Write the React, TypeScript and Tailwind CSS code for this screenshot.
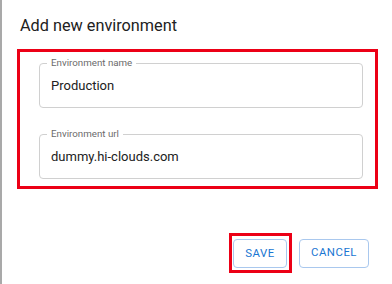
import React from "react";

function Field({ label, value }: { label: string; value: string }) {
  return (
    <div className="relative h-[45px] rounded-[4px] border border-[#d0d0d0] flex items-center pl-[11px]">
      <span className="absolute left-[7px] top-[-7px] bg-white px-[4px] text-[9.75px] leading-[12px] text-[#6b6b6b]">
        {label}
      </span>
      <span className="text-[13px] text-[#212121]">{value}</span>
    </div>
  );
}

export default function App() {
  return (
    <div
      className="w-[392px] h-[284px] bg-white border-l-2 border-[#a9a9a9] flex flex-col"
      style={{ fontFamily: "Roboto, 'Liberation Sans', sans-serif" }}
    >
      <div className="pl-[18px] pt-[15px] h-[49px] text-[16.25px] leading-[22px] text-[#212121]">
        Add new environment
      </div>
      <div className="ml-[15px] w-[361px] h-[140px] border-[3px] border-[#ec0016] pl-[19px] pr-[12px] pt-[11px] flex flex-col gap-[26px]">
        <Field label="Environment name" value="Production" />
        <Field label="Environment url" value="dummy.hi-clouds.com" />
      </div>
      <div className="flex justify-end items-center pr-[23px] pt-[44px] gap-[7px]">
        <div className="border-[3px] border-[#ec0016] pt-[3px] pb-[2px] pl-[1px] pr-[2px]">
          <button className="w-[54px] h-[29px] rounded-[4px] border border-[#a9c8ee] text-[#1976d2] text-[11.4px] font-normal tracking-[0.5px]">
            SAVE
          </button>
        </div>
        <button className="w-[70px] h-[29px] rounded-[4px] border border-[#a9c8ee] text-[#1976d2] text-[11.4px] font-normal tracking-[0.5px]">
          CANCEL
        </button>
      </div>
    </div>
  );
}
